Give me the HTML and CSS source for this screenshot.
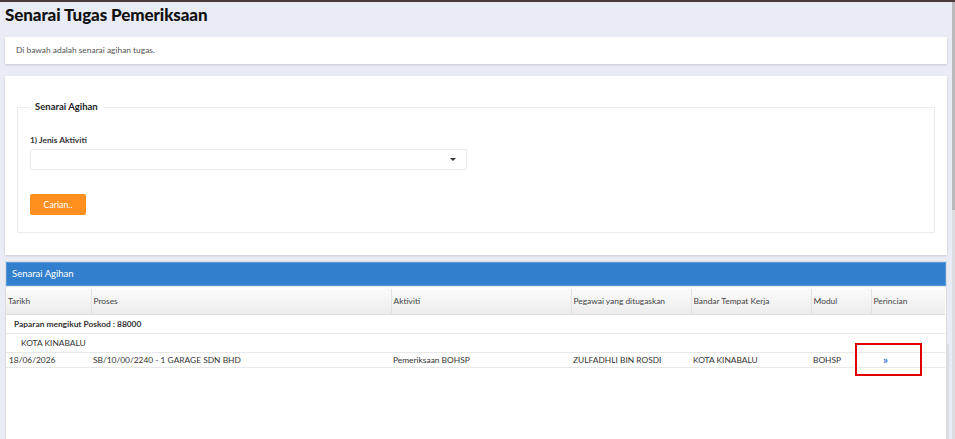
FILE: index.html
```html
<!DOCTYPE html>
<html lang="ms">
<head>
    <meta charset="UTF-8">
    <meta name="viewport" content="width=device-width, initial-scale=1.0">
    <title>Senarai Tugas Pemeriksaan</title>
    <link rel="stylesheet" href="styles.css">
</head>
<body>
    <div class="page">
        <div class="main">
            <h1 class="page-title">Senarai Tugas Pemeriksaan</h1>

            <div class="box note">Di bawah adalah senarai agihan tugas.</div>

            <div class="box search">
                <fieldset class="search-set">
                    <legend>Senarai Agihan</legend>
                    <label class="field-label" for="jenis">1) Jenis Aktiviti</label>
                    <div class="select" id="jenis">
                        <span class="caret"></span>
                    </div>
                    <button class="btn-search" type="button">Carian..</button>
                </fieldset>
            </div>

            <div class="panel">
                <div class="panel-head">Senarai Agihan</div>
                <div class="panel-body">
                    <table class="tasks">
                        <thead>
                            <tr>
                                <th class="c-date">Tarikh</th>
                                <th class="c-proc">Proses</th>
                                <th class="c-act">Aktiviti</th>
                                <th class="c-off">Pegawai yang ditugaskan</th>
                                <th class="c-town">Bandar Tempat Kerja</th>
                                <th class="c-mod">Modul</th>
                                <th class="c-det">Perincian</th>
                            </tr>
                        </thead>
                        <tbody>
                            <tr class="group">
                                <td colspan="7">Paparan mengikut Poskod : 88000</td>
                            </tr>
                            <tr class="subgroup">
                                <td colspan="7">KOTA KINABALU</td>
                            </tr>
                            <tr class="item">
                                <td>18/06/2026</td>
                                <td>SB/10/00/2240 - 1 GARAGE SDN BHD</td>
                                <td>Pemeriksaan BOHSP</td>
                                <td>ZULFADHLI BIN ROSDI</td>
                                <td>KOTA KINABALU</td>
                                <td>BOHSP</td>
                                <td class="detail">
                                    <a href="#" class="more">&raquo;</a>
                                    <span class="mark"></span>
                                </td>
                            </tr>
                        </tbody>
                    </table>
                    <div class="inner-scroll"></div>
                </div>
            </div>
        </div>
        <div class="scroll"></div>
    </div>
</body>
</html>
```

FILE: styles.css
```css
html, body {
    height: 100%;
}
body {
    margin: 0;
    font-family: Lato, "Open Sans", sans-serif;
    font-size: 8.4px;
    color: #333;
    background: #e9ebf5;
    border-top: 2px solid #4a3c3c;
    box-sizing: border-box;
    overflow: hidden;
}
.page {
    display: flex;
    height: 100%;
}
.main {
    flex: 1;
    padding: 0 5px;
    display: flex;
    flex-direction: column;
}
.scroll {
    width: 3px;
    background: linear-gradient(#b9b9bd 0, #b9b9bd 208px, #dcdde3 208px);
}
.page-title {
    margin: 0 0 11px;
    padding-top: 2px;
    font-size: 17px;
    line-height: 22px;
    font-weight: 900;
    letter-spacing: -0.1px;
    color: #111;
}
.box {
    background: #fff;
    box-shadow: 0 1px 2px rgba(0, 0, 0, 0.15);
}
.note {
    height: 27px;
    line-height: 27px;
    padding-left: 11px;
    color: #555;
    margin-bottom: 12px;
}
.search {
    padding: 25px 12px 22px;
    margin-bottom: 6px;
}
.search-set {
    margin: 0;
    padding: 0 12px 17px;
    border: 1px solid #ececec;
}
.search-set legend {
    padding: 0 5px;
    font-size: 9.5px;
    line-height: 12px;
    font-weight: bold;
    color: #222;
}
.field-label {
    display: block;
    margin-top: 21px;
    line-height: 12px;
    font-weight: bold;
    color: #333;
}
.select {
    position: relative;
    width: 435px;
    height: 19px;
    margin-top: 3px;
    border: 1px solid #ededed;
    border-radius: 2px;
}
.caret {
    position: absolute;
    right: 10px;
    top: 8px;
    border-left: 3px solid transparent;
    border-right: 3px solid transparent;
    border-top: 3px solid #333;
}
.btn-search {
    display: block;
    margin-top: 24px;
    width: 56px;
    height: 21px;
    padding: 0;
    border: 0;
    border-radius: 2px;
    background: #ff901f;
    color: #fff;
    font-family: inherit;
    font-size: 8.8px;
}
.panel {
    flex: 1;
    display: flex;
    flex-direction: column;
    background: #fff;
    border: 1px solid #d9dbe2;
    border-bottom: 0;
}
.panel-head {
    height: 22px;
    line-height: 22px;
    padding-left: 5px;
    background: #3280cd;
    border: 1px solid #5a99d8;
    color: #fff;
    font-size: 9.5px;
}
.panel-body {
    flex: 1;
    position: relative;
    padding-top: 2px;
    border-top: 1px solid #e6e6e6;
}
.tasks {
    width: 939px;
    border-collapse: collapse;
    table-layout: fixed;
}
.tasks th,
.tasks td {
    box-sizing: border-box;
}
.tasks th {
    height: 25px;
    padding: 0 2px;
    text-align: left;
    font-weight: normal;
    color: #444;
    background: linear-gradient(#fbfbfb, #ececec);
    border-left: 1px solid #e2e2e2;
    border-bottom: 1px solid #dcdcdc;
}
.tasks th:first-child {
    border-left: 0;
}
.c-date { width: 85px; }
.c-proc { width: 300px; }
.c-act { width: 180px; }
.c-off { width: 120px; }
.c-town { width: 120px; }
.c-mod { width: 60px; }
.c-det { width: 74px; }
.tasks td {
    padding: 0 2px;
    border-bottom: 1px solid #e8e8e8;
    white-space: nowrap;
}
.item td:first-child {
    padding-left: 3px;
}
.group td {
    height: 19px;
    padding-left: 8px;
    font-weight: bold;
}
.subgroup td {
    height: 19px;
    padding-left: 15px;
}
.item td {
    height: 15px;
}
.detail {
    position: relative;
    padding-left: 12px !important;
}
.more {
    color: #3a7fd0;
    text-decoration: none;
    font-size: 11px;
    font-weight: bold;
}
.mark {
    position: absolute;
    left: -16px;
    top: -10px;
    width: 63px;
    height: 29px;
    border: 2px solid #e00000;
}
.inner-scroll {
    position: absolute;
    right: -3px;
    top: 57px;
    bottom: 0;
    width: 3px;
    background: #dcdde3;
}
```
